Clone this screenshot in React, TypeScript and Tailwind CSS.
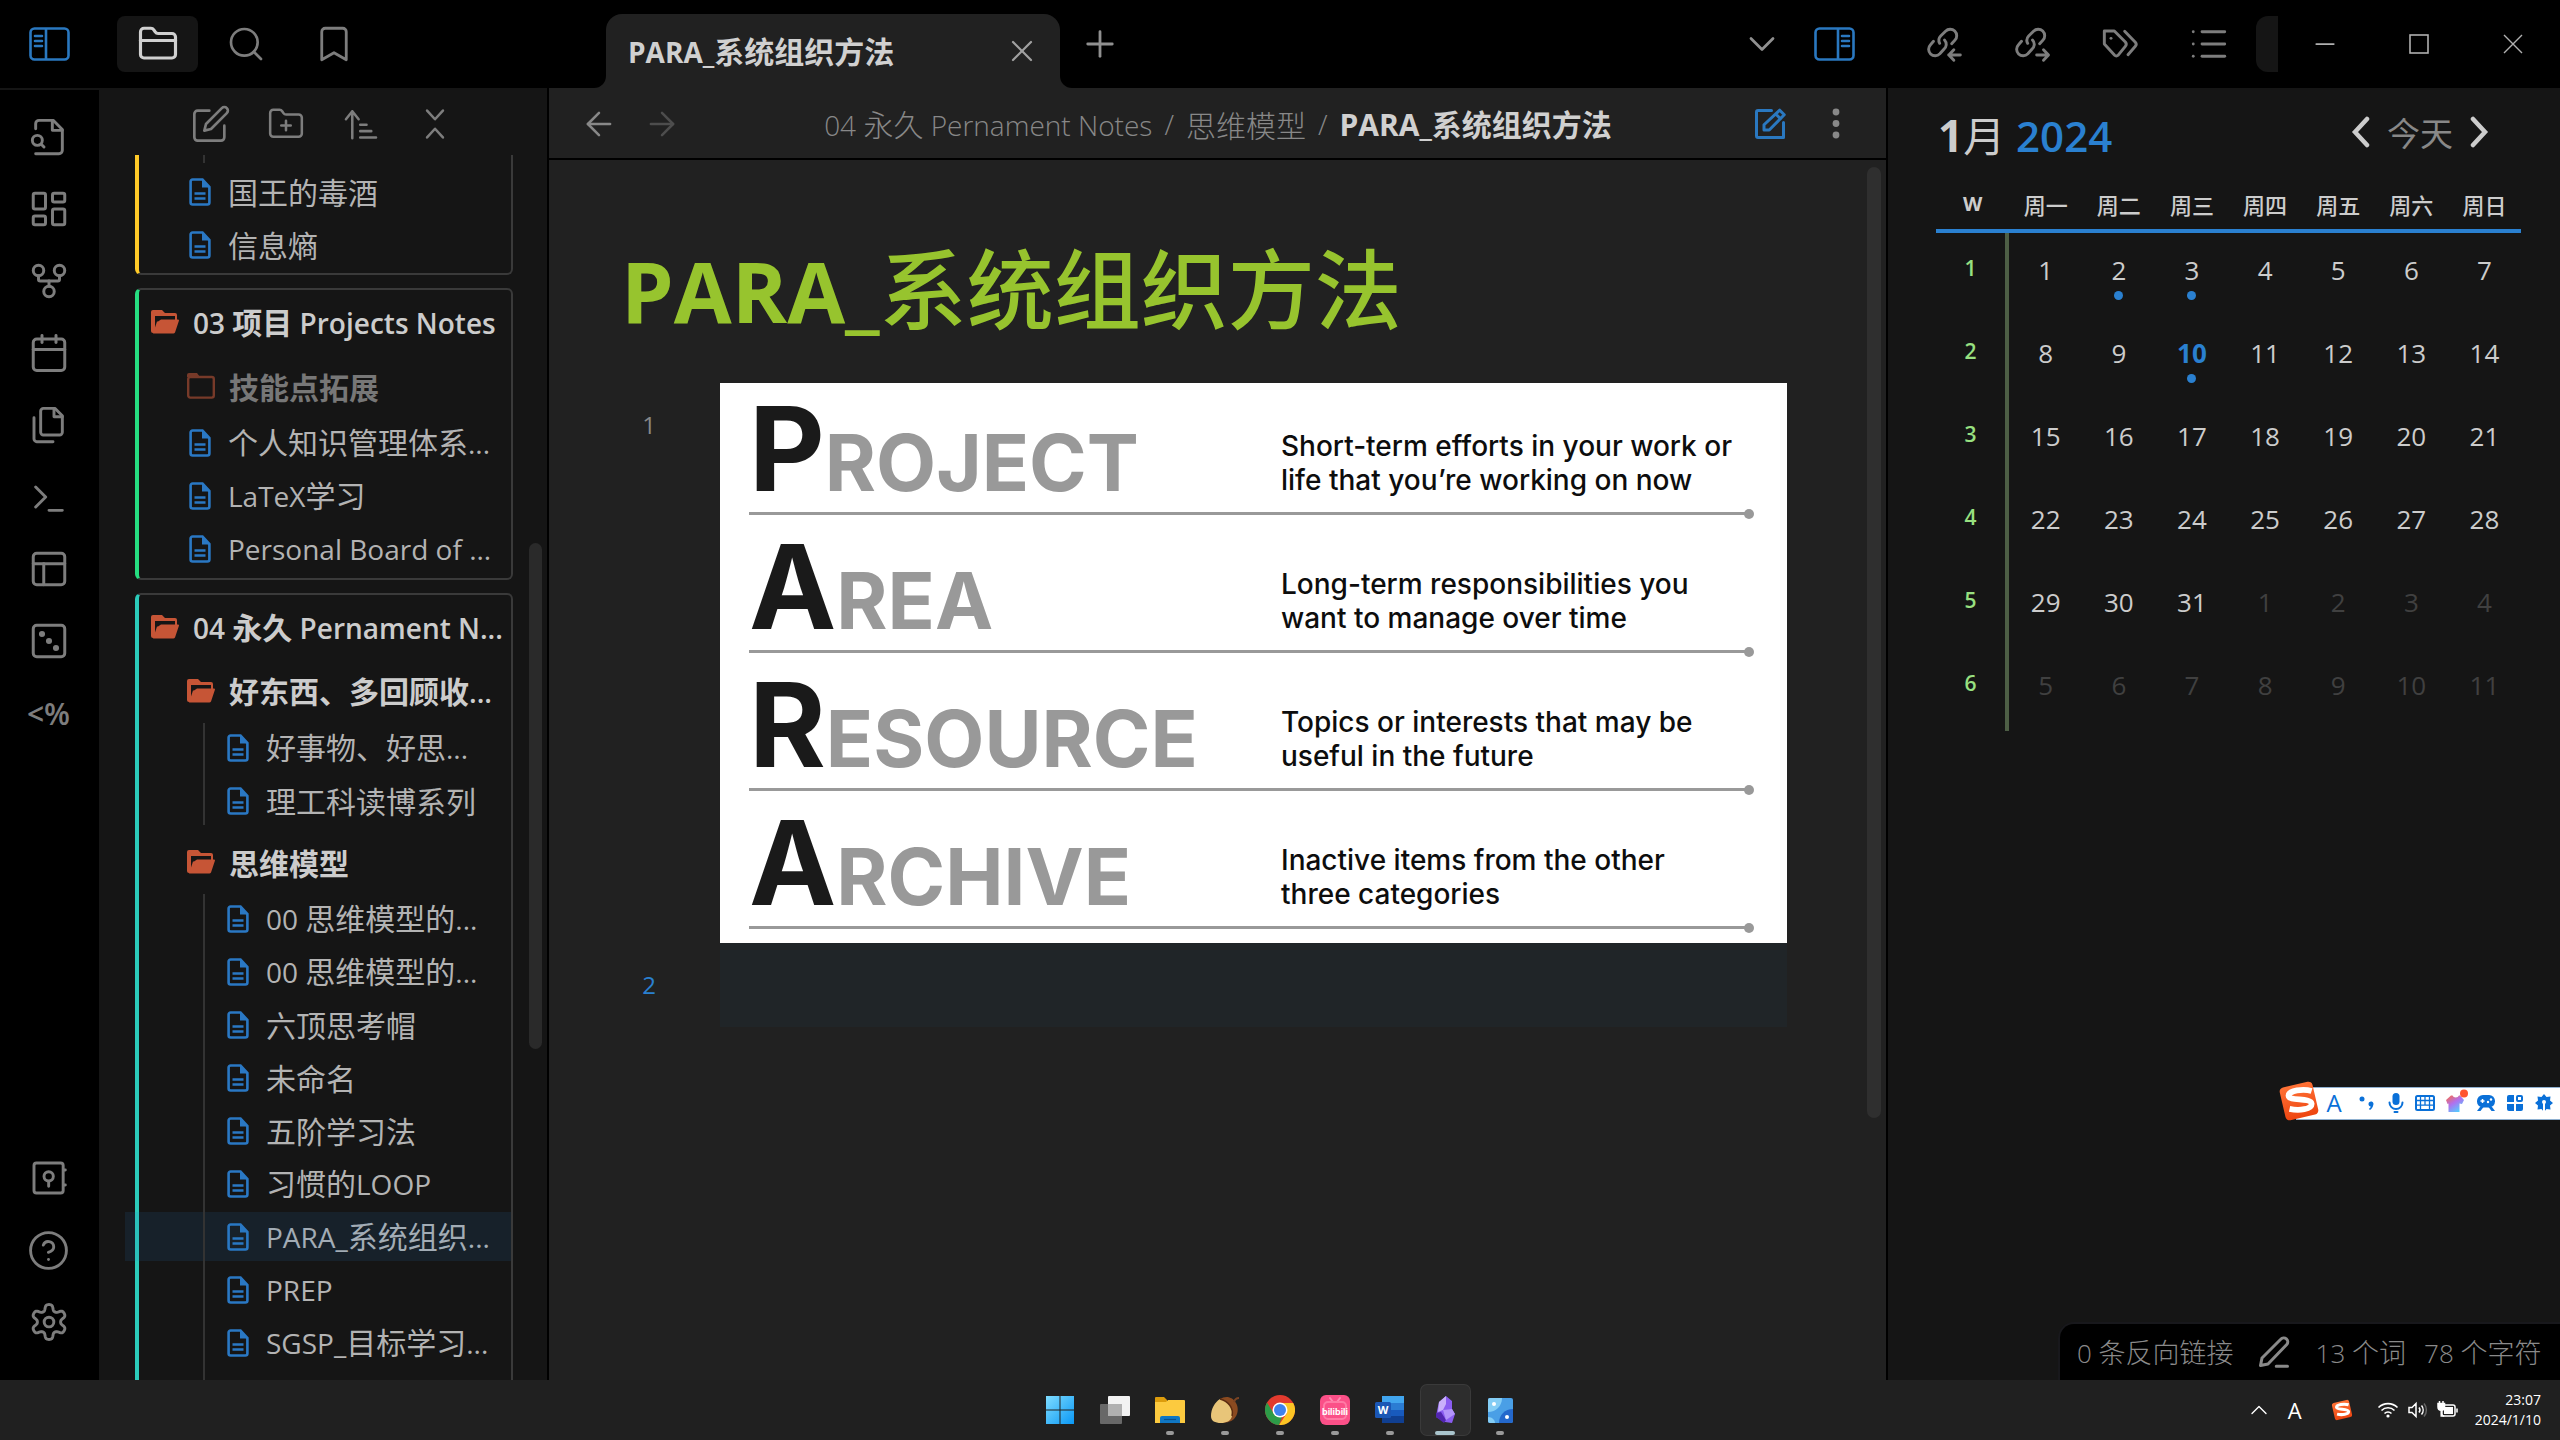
import type { ReactNode } from "react";
import {
  ArrowLeft,
  ArrowRight,
  Bookmark,
  Calendar,
  ChevronDown,
  ChevronUp,
  CircleHelp,
  GitFork,
  LayoutDashboard,
  List,
  Minus,
  PanelsTopLeft,
  Plus,
  Search,
  X,
} from "lucide-react";

const CJK = "font-['Noto_Sans_CJK_SC',sans-serif]";
const LATIN = "font-['Open_Sans','Noto_Sans_CJK_SC',sans-serif]";

/* Sets Latin runs slightly smaller than the Chinese text around them. */
function Mixed({ text, latin }: { text: string; latin: string }) {
  const parts = text.split(/([\x20-\x7e]+)/).filter(Boolean);
  return (
    <>
      {parts.map((p, i) =>
        /^[\x20-\x7e]/.test(p) ? (
          <span key={i} className={`${LATIN} ${latin} whitespace-pre`}>
            {p}
          </span>
        ) : (
          <span key={i}>{p}</span>
        ),
      )}
    </>
  );
}

function Stroke({ size = 40, width = 1.75, children }: { size?: number; width?: number; children: ReactNode }) {
  return (
    <svg
      width={size}
      height={size}
      viewBox="0 0 24 24"
      fill="none"
      stroke="currentColor"
      strokeWidth={width}
      strokeLinecap="round"
      strokeLinejoin="round"
    >
      {children}
    </svg>
  );
}

function SidePanelIcon({ right = false }: { right?: boolean }) {
  return (
    <svg width="41" height="34" viewBox="0 0 41 34" fill="none" stroke="currentColor" strokeWidth="2.6">
      <rect x="1.5" y="1.5" width="38" height="31" rx="4" />
      <path d={right ? "M24 2v30" : "M17 2v30"} />
      <path d={right ? "M28 9h7M28 14h7M28 19h7" : "M6 9h7M6 14h7M6 19h7"} strokeLinecap="round" />
    </svg>
  );
}

const gearPath = (() => {
  const pts: string[] = [];
  for (let i = 0; i < 120; i++) {
    const a = (i / 120) * Math.PI * 2;
    const c = Math.cos(6 * (a - Math.PI / 2));
    const r = 8.7 + 1.9 * Math.tanh(1.6 * c + 0.1);
    pts.push(`${(12 + r * Math.cos(a)).toFixed(2)} ${(12 + r * Math.sin(a)).toFixed(2)}`);
  }
  return `M${pts.join("L")}Z`;
})();

const FileSearchIcon = () => (
  <Stroke>
    <path d="M4 22h14a2 2 0 0 0 2-2V7.5L14.5 2H6a2 2 0 0 0-2 2v3" />
    <path d="M14 2v6h6" />
    <circle cx="5" cy="14" r="3" />
    <path d="m9 18-1.5-1.5" />
  </Stroke>
);

const FilesIcon = () => (
  <Stroke>
    <path d="M15.5 2H8.6c-.4 0-.8.2-1.1.5-.3.3-.5.7-.5 1.1v12.8c0 .4.2.8.5 1.1.3.3.7.5 1.1.5h9.8c.4 0 .8-.2 1.1-.5.3-.3.5-.7.5-1.1V6.5L15.5 2z" />
    <path d="M3 7.6v12.8c0 .4.2.8.5 1.1.3.3.7.5 1.1.5h9.8" />
    <path d="M15 2v5h5" />
  </Stroke>
);

const TerminalIcon = () => (
  <Stroke>
    <path d="m4 18 6-6-6-6M12 20h8" />
  </Stroke>
);

const DiceIcon = () => (
  <Stroke size={42} width={1.7}>
    <rect x="3" y="3" width="18" height="18" rx="2" />
    <g fill="currentColor">
      <circle cx="8" cy="8" r="0.900" />
      <circle cx="12" cy="12" r="0.900" />
      <circle cx="16" cy="16" r="0.900" />
    </g>
  </Stroke>
);

const VaultIcon = () => (
  <Stroke>
    <rect x="3" y="3" width="17.5" height="18" rx="1.5" />
    <circle cx="11.8" cy="11" r="2.8" />
    <path d="M11.8 14v3M21 7.2h.8M21 16.2h.8" />
  </Stroke>
);

const GearIcon = () => (
  <Stroke>
    <path d={gearPath} />
    <circle cx="12" cy="12" r="2.9" />
  </Stroke>
);

const LinkIcon = ({ out = false }: { out?: boolean }) => (
  <Stroke size={40}>
    <path d="M9.2 11.4a3.8 3.8 0 0 1 .6-4.4l2.9-2.9a3.9 3.9 0 0 1 5.6 5.5l-1.9 2" transform="translate(-.4 .2)" />
    <path d="M11.7 9.4a3.8 3.8 0 0 1-.5 5.7l-2.3 2.6a3.9 3.9 0 0 1-5.6-5.5l1.8-2" transform="translate(0 .2)" />
    {out ? <path d="M14.2 18.6h7M18.3 15.5l3 3.1-3 3.1" /> : <path d="M14.2 18.6h7M17.3 15.5l-3 3.1 3 3.1" />}
  </Stroke>
);

const TagsIcon = () => (
  <Stroke size={40}>
    <path d="M2.2 4.2h6l6.6 6.6a2 2 0 0 1 0 2.6l-4.4 5.4a1.4 1.4 0 0 1-2 0L2.2 12Z" transform="translate(-.2 0)" />
    <path d="M6 8.6h.01" />
    <path d="m14.2 4.4 6.4 6.6a1.8 1.8 0 0 1 0 2.4l-4.4 5" />
  </Stroke>
);

const EditIcon = ({ size = 40, width = 1.75 }: { size?: number; width?: number }) => (
  <Stroke size={size} width={width}>
    <path d="M11 4H4a2 2 0 0 0-2 2v14a2 2 0 0 0 2 2h14a2 2 0 0 0 2-2v-7" />
    <path d="M18.5 2.5a2.1 2.1 0 0 1 3 3L12 15l-4 1 1-4Z" />
  </Stroke>
);

const FolderLineIcon = () => (
  <Stroke size={42} width={1.8}>
    <path d="M20 20a2 2 0 0 0 2-2V8a2 2 0 0 0-2-2h-7.9a2 2 0 0 1-1.7-.9L9.6 3.9A2 2 0 0 0 7.9 3H4a2 2 0 0 0-2 2v13a2 2 0 0 0 2 2Z" />
    <path d="M2 10h20" />
  </Stroke>
);

const FileIcon = () => (
  <svg width="22" height="28" viewBox="0 0 22 28" className="shrink-0" fill="none" stroke="#2a78c4" strokeWidth="2.6">
    <path d="M13.5 1.5H3.6a2 2 0 0 0-2 2v21a2 2 0 0 0 2 2h14.8a2 2 0 0 0 2-2V9Z" />
    <path d="M13 2v7.5h7.5Z" fill="#2a78c4" stroke="none" />
    <path d="M5.5 15.5h11M5.5 20.5h11" strokeWidth="2.4" />
  </svg>
);

const OpenFolderIcon = () => (
  <svg width="28" height="24" viewBox="0 0 28 24" className="shrink-0">
    <path d="M2 0h9l3 3h10a2 2 0 0 1 2 2v5h-2V6H4v6L2 18Z" fill="#c65536" />
    <path d="M0 2a2 2 0 0 1 2-2h2v23H2a2 2 0 0 1-2-2Z" fill="#c65536" />
    <path d="M6 11.5h1L10 9.5h17a1 1 0 0 1 1 1l-4 12a2 2 0 0 1-2 1H2Z" fill="#c65536" />
  </svg>
);

const ClosedFolderIcon = () => (
  <svg width="28" height="26" viewBox="0 0 28 26" className="shrink-0">
    <path d="M0 2a2 2 0 0 1 2-2h8l3 4H0Z" fill="#773a29" />
    <rect x="1.2" y="4" width="25.6" height="20.6" rx="2" fill="none" stroke="#773a29" strokeWidth="2.4" />
  </svg>
);

function IconButton({ label, className = "", children }: { label: string; className?: string; children: ReactNode }) {
  return (
    <button type="button" aria-label={label} className={`flex shrink-0 items-center justify-center ${className}`}>
      {children}
    </button>
  );
}

function TopBar() {
  return (
    <header className="flex h-[88px] shrink-0 bg-black text-[#7d7d7d]">
      <div className="flex w-[549px] shrink-0 pt-4">
        <IconButton label="折叠左侧栏" className="h-14 w-[99px] text-[#2a78c0]">
          <SidePanelIcon />
        </IconButton>
        <div className="ml-[18px] flex gap-[7px]">
          <IconButton label="文件列表" className="h-14 w-[81px] rounded-lg bg-[#151515] text-[#d0d0d0]">
            <FolderLineIcon />
          </IconButton>
          <IconButton label="搜索" className="h-14 w-[81px]">
            <Search size={40} strokeWidth={1.6} />
          </IconButton>
          <IconButton label="书签" className="h-14 w-[81px]">
            <Bookmark size={42} strokeWidth={1.6} />
          </IconButton>
        </div>
      </div>

      <div className="flex min-w-0 flex-1 items-end">
        <div className="ml-[45px] size-3 shrink-0 bg-[#212121]">
          <div className="size-3 rounded-br-xl bg-black" />
        </div>
        <div className="flex h-[74px] w-[454px] items-center rounded-t-2xl bg-[#212121] pr-5 pl-[22px]">
          <span className={`${CJK} flex-1 text-[30px] leading-10 font-bold whitespace-nowrap text-[#d0d0d0]`}>
            <Mixed text="PARA_系统组织方法" latin="text-[28px]" />
          </span>
          <IconButton label="关闭标签页" className="size-9 text-[#a0a0a0]">
            <X size={38} strokeWidth={1.5} />
          </IconButton>
        </div>
        <div className="size-3 shrink-0 bg-[#212121]">
          <div className="size-3 rounded-bl-xl bg-black" />
        </div>
        <div className="flex flex-1 justify-between self-stretch pt-4 pr-6">
          <IconButton label="新标签页" className="ml-1.5 h-14 w-11 text-[#909090]">
            <Plus size={42} strokeWidth={1.6} />
          </IconButton>
          <div className="flex gap-3">
            <IconButton label="标签页列表" className="h-14 w-[60px] text-[#909090]">
              <ChevronDown size={44} strokeWidth={1.5} />
            </IconButton>
            <IconButton label="折叠右侧栏" className="h-14 w-[60px] text-[#2a78c0]">
              <SidePanelIcon right />
            </IconButton>
          </div>
        </div>
      </div>

      <div className="flex w-[672px] shrink-0 gap-[7px] pt-4 pl-4">
        <IconButton label="反向链接" className="h-14 w-[81px]">
          <LinkIcon />
        </IconButton>
        <IconButton label="出链" className="h-14 w-[81px]">
          <LinkIcon out />
        </IconButton>
        <IconButton label="标签" className="h-14 w-[81px]">
          <TagsIcon />
        </IconButton>
        <IconButton label="大纲" className="h-14 w-[81px]">
          <List size={42} strokeWidth={1.6} />
        </IconButton>
        <IconButton label="日历" className="h-14 w-[22px] rounded-l-xl bg-[#151515]">
          {null}
        </IconButton>
        <div className="-ml-[7px] flex flex-1 text-[#b0b0b0]">
          <IconButton label="最小化" className="h-14 flex-1">
            <Minus size={30} strokeWidth={1.4} />
          </IconButton>
          <IconButton label="最大化" className="h-14 flex-1">
            <svg width="20" height="20" viewBox="0 0 20 20" fill="none" stroke="currentColor" strokeWidth="1.6">
              <rect x="1" y="1" width="18" height="18" />
            </svg>
          </IconButton>
          <IconButton label="关闭" className="h-14 flex-1">
            <svg width="20" height="20" viewBox="0 0 20 20" fill="none" stroke="currentColor" strokeWidth="1.4">
              <path d="M1 1l18 18M19 1L1 19" />
            </svg>
          </IconButton>
        </div>
      </div>
    </header>
  );
}

function Ribbon() {
  return (
    <nav className="flex w-[99px] shrink-0 flex-col items-center justify-between border-t-2 border-[#151515] bg-black pt-[11px] pr-[2px] pb-[22px] text-[#7d7d7d]">
      <div className="flex flex-col">
        <IconButton label="快速切换" className="h-[72px] w-16">
          <FileSearchIcon />
        </IconButton>
        <IconButton label="新建白板" className="h-[72px] w-16">
          <LayoutDashboard size={42} strokeWidth={1.7} />
        </IconButton>
        <IconButton label="关系图谱" className="h-[72px] w-16">
          <GitFork size={42} strokeWidth={1.7} />
        </IconButton>
        <IconButton label="今日日记" className="h-[72px] w-16">
          <Calendar size={42} strokeWidth={1.7} />
        </IconButton>
        <IconButton label="插入模板" className="h-[72px] w-16">
          <FilesIcon />
        </IconButton>
        <IconButton label="命令面板" className="h-[72px] w-16">
          <TerminalIcon />
        </IconButton>
        <IconButton label="工作区布局" className="h-[72px] w-16">
          <PanelsTopLeft size={42} strokeWidth={1.7} />
        </IconButton>
        <IconButton label="随机笔记" className="h-[72px] w-16">
          <DiceIcon />
        </IconButton>
        <IconButton label="Templater" className={`${LATIN} h-[72px] w-16 text-[30px] font-semibold`}>
          &lt;%
        </IconButton>
      </div>
      <div className="flex flex-col">
        <IconButton label="打开其他仓库" className="h-[72px] w-16">
          <VaultIcon />
        </IconButton>
        <IconButton label="帮助" className="h-[72px] w-16">
          <CircleHelp size={43} strokeWidth={1.6} />
        </IconButton>
        <IconButton label="设置" className="h-[72px] w-16">
          <GearIcon />
        </IconButton>
      </div>
    </nav>
  );
}

function FileRow({ name, depth = 1, active = false }: { name: string; depth?: 1 | 2; active?: boolean }) {
  return (
    <a
      href="#"
      aria-current={active ? "page" : undefined}
      className={`relative flex h-[49px] items-center gap-[17px] ${depth === 2 ? "pl-[88px]" : "pl-[50px]"} ${
        active ? "before:absolute before:inset-y-0 before:-left-3.5 before:right-0 before:bg-[#2a78c4]/12" : ""
      }`}
    >
      <FileIcon />
      <span className="text-[30px] leading-[45px] whitespace-nowrap text-[#b3b3b3]">
        <Mixed text={name} latin="text-[28px]" />
      </span>
    </a>
  );
}

function FolderRow({ name, depth = 0, open = true }: { name: string; depth?: 0 | 1; open?: boolean }) {
  return (
    <button
      type="button"
      aria-expanded={open}
      className={`flex h-16 w-full items-center gap-[14px] ${depth === 1 ? "pl-12" : "pl-3"}`}
    >
      {open ? <OpenFolderIcon /> : <ClosedFolderIcon />}
      <span className={`text-[30px] leading-[45px] font-bold whitespace-nowrap ${open ? "text-[#cccccc]" : "text-[#777777]"}`}>
        <Mixed text={name} latin="text-[28px] font-semibold" />
      </span>
    </button>
  );
}

function Guide({ grow = false, children }: { grow?: boolean; children: ReactNode }) {
  return (
    <div
      className={`relative flex flex-col gap-1 after:absolute after:inset-y-0 after:left-16 after:w-0.5 after:bg-[#333333] ${
        grow ? "flex-1" : ""
      }`}
    >
      {children}
    </div>
  );
}

const notes = [
  "00 思维模型的...",
  "00 思维模型的...",
  "六顶思考帽",
  "未命名",
  "五阶学习法",
  "习惯的LOOP",
  "PARA_系统组织...",
  "PREP",
  "SGSP_目标学习...",
];

function Explorer() {
  return (
    <aside className={`${CJK} flex w-[448px] shrink-0 flex-col bg-[#151515]`}>
      <div className="flex h-[67px] shrink-0 items-center pt-[5px] pl-[74px] text-[#7d7d7d]">
        <IconButton label="新建笔记" className="h-12 w-[75px]">
          <EditIcon size={40} width={1.6} />
        </IconButton>
        <IconButton label="新建文件夹" className="h-12 w-[75px]">
          <Stroke size={38} width={1.6}>
            <path d="M20 20a2 2 0 0 0 2-2V8a2 2 0 0 0-2-2h-7.9a2 2 0 0 1-1.7-.9L9.6 3.9A2 2 0 0 0 7.9 3H4a2 2 0 0 0-2 2v13a2 2 0 0 0 2 2Z" />
            <path d="M12 10v6M9 13h6" />
          </Stroke>
        </IconButton>
        <IconButton label="排序方式" className="h-12 w-[75px]">
          <Stroke size={38} width={1.6}>
            <path d="m2.5 9 4-5 4 5M6.500 4v17M11.500 12.500h4M11.500 16.500h7M11.500 20.500h10" />
          </Stroke>
        </IconButton>
        <IconButton label="全部折叠" className="h-12 w-[73px]">
          <Stroke size={38} width={1.6}>
            <path d="m7 3.500 5 5.500 5-5.500M7 20.500l5-5.500 5 5.500" />
          </Stroke>
        </IconButton>
      </div>
      <div className="flex min-h-0 flex-1">
        <div className="ml-9 flex w-[378px] flex-col gap-[13px]">
          <section className="relative shrink-0 rounded-b-md border-r-2 border-b-2 border-l-4 border-[#3a3a3a] border-l-[#ffca28] pt-3 pb-1">
            <div className="absolute top-0 left-16 h-2 w-0.5 bg-[#333333]" />
            <div className="flex flex-col gap-1">
              <FileRow name="国王的毒酒" />
              <FileRow name="信息熵" />
            </div>
          </section>
          <section className="shrink-0 rounded-md border-2 border-l-4 border-[#3a3a3a] border-l-[#26de81] pb-[5px]">
            <FolderRow name="03 项目 Projects Notes" />
            <FolderRow name="技能点拓展" depth={1} open={false} />
            <div className="flex flex-col gap-1">
              <FileRow name="个人知识管理体系..." />
              <FileRow name="LaTeX学习" />
              <FileRow name="Personal Board of ..." />
            </div>
          </section>
          <section className="flex min-h-0 flex-1 flex-col rounded-t-md border-2 border-b-0 border-l-4 border-[#3a3a3a] border-l-[#2bcbba]">
            <FolderRow name="04 永久 Pernament N..." />
            <FolderRow name="好东西、多回顾收..." depth={1} />
            <Guide>
              <FileRow name="好事物、好思..." depth={2} />
              <FileRow name="理工科读博系列" depth={2} />
            </Guide>
            <div className="pt-[5px]">
              <FolderRow name="思维模型" depth={1} />
            </div>
            <Guide grow>
              {notes.map((n, i) => (
                <FileRow key={i} name={n} depth={2} active={n.startsWith("PARA")} />
              ))}
            </Guide>
          </section>
        </div>
        <div className="mt-[388px] ml-4 h-[506px] w-[13px] rounded-full bg-[#2a2a2a]" />
      </div>
    </aside>
  );
}

const para = [
  { head: "P", rest: "ROJECT", lines: ["Short-term efforts in your work or", "life that you’re working on now"] },
  { head: "A", rest: "REA", lines: ["Long-term responsibilities you", "want to manage over time"] },
  { head: "R", rest: "ESOURCE", lines: ["Topics or interests that may be", "useful in the future"] },
  { head: "A", rest: "RCHIVE", lines: ["Inactive items from the other", "three categories"] },
];

function ParaFigure() {
  return (
    <figure className="bg-white pr-[37px] pb-[14px] pl-[29px] font-['Inter',sans-serif]">
      {para.map((r, i) => (
        <div key={i} className="relative flex h-[138px] items-end justify-between border-b-3 border-[#999999] first:h-[132px]">
          <div className="flex items-baseline pb-[5px] leading-[88px] font-bold whitespace-nowrap">
            <span className="text-[117px] text-[#1a1a1a]">{r.head}</span>
            <span className="text-[78px] text-[#999999]">{r.rest}</span>
          </div>
          <p className="w-[469px] pb-[15px] text-[28px] leading-[34px] font-medium whitespace-nowrap text-[#0d0d0d]">
            {r.lines[0]}
            <br />
            {r.lines[1]}
          </p>
          <div className="absolute -right-1 -bottom-[7px] size-2.5 rounded-full bg-[#999999]" />
        </div>
      ))}
    </figure>
  );
}

function Editor() {
  return (
    <main className={`${CJK} flex min-w-0 flex-1 flex-col border-x-2 border-black bg-[#212121]`}>
      <div className="flex h-[72px] shrink-0 items-center border-b-2 border-black pt-0.5 pr-[17px] pl-[18px] text-[#888888]">
        <div className="flex w-40">
          <IconButton label="后退" className="h-12 w-[63px]">
            <ArrowLeft size={38} strokeWidth={1.6} />
          </IconButton>
          <IconButton label="前进" className="h-12 w-[63px] text-[#4d4d4d]">
            <ArrowRight size={38} strokeWidth={1.6} />
          </IconButton>
        </div>
        <nav className="flex flex-1 items-center justify-center text-[30px] leading-[44px] font-light whitespace-nowrap">
          <a href="#"><Mixed text="04 永久 Pernament Notes" latin="text-[28px]" /></a>
          <span className={`${LATIN} px-3 text-[28px]`}>/</span>
          <a href="#">思维模型</a>
          <span className={`${LATIN} px-3 text-[28px]`}>/</span>
          <span className="font-bold text-[#d0d0d0]"><Mixed text="PARA_系统组织方法" latin="text-[30px]" /></span>
        </nav>
        <div className="flex w-40 justify-end">
          <IconButton label="切换为阅读视图" className="h-12 w-[66px] text-[#2a78c0]">
            <Stroke size={36} width={2}>
              <path d="M13 3H4a1 1 0 0 0-1 1v16a1 1 0 0 0 1 1h17V11" />
              <path d="M8 16v-3.500L18.500 2.800l3 3L11.500 16ZM16 5.500l3 3" />
            </Stroke>
          </IconButton>
          <IconButton label="更多选项" className="h-12 w-[66px]">
            <svg width="8" height="32" viewBox="0 0 8 32" fill="currentColor">
              <circle cx="4" cy="4" r="3.4" />
              <circle cx="4" cy="15.500" r="3.4" />
              <circle cx="4" cy="27" r="3.4" />
            </svg>
          </IconButton>
        </div>
      </div>
      <div className="flex min-h-0 flex-1">
        <article className="min-w-0 flex-1 pt-[61px] pr-20 pl-[72px]">
          <h1 className="text-[87px] leading-[128px] font-medium whitespace-nowrap text-[#97c42e]">
            <Mixed text="PARA_系统组织方法" latin="text-[84px] font-bold" />
          </h1>
          <div className="mt-7 grid grid-cols-[60px_1fr] gap-x-[39px]">
            <div className={`${LATIN} pt-6 pr-1 text-center text-[24px] leading-9 text-[#888888]`}>1</div>
            <ParaFigure />
            <div className={`${LATIN} pt-6 pr-1 text-center text-[24px] leading-9 text-[#2a80d0]`}>2</div>
            <div className="h-[84px] bg-[#202528]" />
          </div>
        </article>
        <div className="mt-[7px] mr-[5px] h-[951px] w-[14px] rounded-full bg-[#2f2f2f]" />
      </div>
    </main>
  );
}

const weeks = [
  [1, 2, 3, 4, 5, 6, 7],
  [8, 9, 10, 11, 12, 13, 14],
  [15, 16, 17, 18, 19, 20, 21],
  [22, 23, 24, 25, 26, 27, 28],
  [29, 30, 31, 1, 2, 3, 4],
  [5, 6, 7, 8, 9, 10, 11],
];

function CalendarPanel() {
  return (
    <aside className={`${CJK} relative flex w-[672px] shrink-0 flex-col justify-between bg-[#151515]`}>
      <div className="pr-[39px] pl-12">
        <div className="flex h-[97px] items-center justify-between pr-8 pl-0.5">
          <h2 className="pb-1 text-[42px] leading-[60px] text-[#cccccc]">
            <Mixed text="1" latin="text-[44px] font-bold" />
            月
            <Mixed text=" 2024" latin="text-[42px] font-semibold text-[#2a80d0]" />
          </h2>
          <div className="flex items-center gap-4 pb-2.5">
            <IconButton label="上个月" className="text-[#cccccc]">
              <svg width="20" height="32" viewBox="0 0 20 32" fill="none" stroke="currentColor" strokeWidth="4.500" strokeLinecap="round">
                <path d="M16 3 4 16l12 13" />
              </svg>
            </IconButton>
            <button type="button" className="text-[33px] leading-[44px] text-[#888888]">今天</button>
            <IconButton label="下个月" className="text-[#cccccc]">
              <svg width="20" height="32" viewBox="0 0 20 32" fill="none" stroke="currentColor" strokeWidth="4.500" strokeLinecap="round">
                <path d="M4 3l12 13L4 29" />
              </svg>
            </IconButton>
          </div>
        </div>
        <table className="w-full table-fixed border-separate border-spacing-0">
          <thead>
            <tr className="h-12 text-[22px] leading-8 text-[#cccccc]">
              <th className={`${LATIN} border-b-4 border-[#2a80d0] p-0 pb-1.5 text-[20px] font-bold`}>W</th>
              {["周一", "周二", "周三", "周四", "周五", "周六", "周日"].map((d) => (
                <th key={d} className="border-b-4 border-[#2a80d0] p-0 pb-1.5 font-medium whitespace-nowrap">
                  {d}
                </th>
              ))}
            </tr>
          </thead>
          <tbody className={LATIN}>
            {weeks.map((w, i) => (
              <tr key={i}>
                <th className="border-r-4 border-[#4d5e45] p-0 pt-[19px] align-top text-[21px] leading-8 font-semibold text-[#98e080]">
                  {i + 1}
                </th>
                {w.map((d, j) => {
                  const outside = (i === 4 && j > 2) || i === 5;
                  const today = i === 1 && j === 2;
                  const dot = today || (i === 0 && (j === 1 || j === 2));
                  return (
                    <td key={j} className="p-0">
                      <button
                        type="button"
                        className={`flex h-[83px] w-full flex-col items-center gap-[5px] pt-[21px] text-[26px] leading-8 ${
                          outside ? "text-[#404040]" : today ? "font-bold text-[#2a80d0]" : "text-[#cccccc]"
                        }`}
                      >
                        {d}
                        {dot && <span className="size-[9px] rounded-full bg-[#2a80d0]" />}
                      </button>
                    </td>
                  );
                })}
              </tr>
            ))}
          </tbody>
        </table>
      </div>

      <footer className="flex h-[58px] w-[502px] items-center self-end rounded-tl-2xl border-t-2 border-l-2 border-[#18181c] bg-black pl-[17px] text-[27px] leading-10 font-light whitespace-nowrap text-[#8a8a8a]">
        <span><Mixed text="0 条反向链接" latin="text-[26px]" /></span>
        <span className="mr-6 ml-[22px]">
          <Stroke size={36} width={2}>
            <path d="M3 21l1-5L16.500 3.500a2.500 2.500 0 0 1 4 3.500L8 20l-5 1ZM13.500 21.500H21" />
          </Stroke>
        </span>
        <span><Mixed text="13 个词" latin="text-[26px]" /></span>
        <span className="ml-[18px]"><Mixed text="78 个字符" latin="text-[26px]" /></span>
      </footer>

      <InputMethodBar />
    </aside>
  );
}

function SogouLogo({ size }: { size: number }) {
  return (
    <svg width={size} height={size} viewBox="0 0 40 40" className="shrink-0">
      <defs>
        <linearGradient id="sogou" x1="0" y1="0" x2="0" y2="1">
          <stop offset="0" stopColor="#ff7236" />
          <stop offset="1" stopColor="#ee4510" />
        </linearGradient>
      </defs>
      <rect x="4" y="4" width="32" height="32" rx="4" fill="url(#sogou)" transform="rotate(-13 20 20)" />
      <path
        d="M32 10.500C24 8 10 10 10 15c0 5.500 21 1.500 22 7.500.5 5.500-12 7-21 5"
        fill="none"
        stroke="#fff"
        strokeWidth="5.500"
      />
    </svg>
  );
}

function InputMethodBar() {
  return (
    <div className="absolute top-[993px] right-0 flex h-[39px] w-[282px] items-center">
      <div className="absolute inset-x-0 top-[6px] bottom-0 left-[18px] border-y border-[#8fb0d0] bg-white" />
      <div className="relative flex w-full items-center text-[#0a70d8]">
        <SogouLogo size={42} />
        <div className="flex flex-1 items-center justify-between pt-1 pr-1">
          <span className={`${LATIN} w-7 text-center text-[24px] leading-8`}>A</span>
          <svg width="26" height="24" viewBox="0 0 26 24" fill="currentColor">
            <circle cx="9" cy="8" r="2.500" />
            <path d="M15.500 13a2.500 2.500 0 1 1 4.700 1.200c-.4 2.200-1.600 3.800-3.400 4.800l-.8-1.200c1-.7 1.600-1.400 1.700-2.300-1.300 0-2.200-1-2.200-2.500Z" />
          </svg>
          <svg width="24" height="24" viewBox="0 0 24 24" fill="none" stroke="currentColor" strokeWidth="2" strokeLinecap="round">
            <rect x="8.500" y="2" width="7" height="12" rx="3.500" fill="currentColor" stroke="none" />
            <path d="M5.500 11.500a6.500 6.500 0 0 0 13 0M10.500 21h3" />
          </svg>
          <svg width="24" height="24" viewBox="0 0 24 24" fill="none" stroke="currentColor" strokeWidth="2">
            <rect x="3" y="5" width="18" height="14" rx="1.500" />
            <path d="M7.500 5v14M12 5v9M16.500 5v14M3 9.500h18M3 14.200h18" strokeWidth="1.300" />
          </svg>
          <svg width="26" height="28" viewBox="0 0 26 28">
            <defs>
              <linearGradient id="shirt" x1="0" y1="0" x2="0.700" y2="1">
                <stop offset="0" stopColor="#ff6a3a" />
                <stop offset="0.500" stopColor="#b070f0" />
                <stop offset="1" stopColor="#50d0ff" />
              </linearGradient>
            </defs>
            <path d="M3 11l5-4.500h1.500a3.500 3 0 0 0 6.500 0h1L21 11l-2 4-2.500-.5V23h-11v-8.500L4.500 15Z" fill="url(#shirt)" />
            <circle cx="21" cy="4.500" r="4" fill="#ff5530" />
          </svg>
          <svg width="24" height="24" viewBox="0 0 24 24" fill="currentColor">
            <rect x="3" y="4" width="18" height="12.500" rx="6" />
            <path d="M3 20l3-4h3.500l-3 4ZM21 20l-3-4h-3.500l3 4Z" />
            <path d="M8.500 8v4M6.500 10h4" stroke="#fff" strokeWidth="1.500" />
            <circle cx="14" cy="11" r="1.200" fill="#fff" />
            <circle cx="17" cy="8.500" r="1.200" fill="#fff" />
          </svg>
          <svg width="24" height="24" viewBox="0 0 24 24" fill="currentColor">
            <path d="M6 4h5v7H4V6a2 2 0 0 1 2-2ZM4 13h7v7H6a2 2 0 0 1-2-2ZM13 13h7v5a2 2 0 0 1-2 2h-5Z" />
            <rect x="14" y="5" width="5" height="5" rx="1" fill="none" stroke="currentColor" strokeWidth="2" />
          </svg>
          <svg width="24" height="24" viewBox="0 0 24 24">
            <path d="M12 3l2.500 3 4-.5-.5 4 3 2.500-3 2.500.5 4-4-.5L12 21l-2.500-3-4 .5.5-4L3 12l3-2.500-.5-4 4 .5Z" fill="#0a70d8" />
            <path d="M12 11v10" stroke="#fff" strokeWidth="2" />
            <circle cx="12" cy="11" r="2" fill="#fff" />
          </svg>
        </div>
      </div>
    </div>
  );
}

function TaskButton({ label, running = true, active = false, children }: { label: string; running?: boolean; active?: boolean; children: ReactNode }) {
  return (
    <button
      type="button"
      aria-label={label}
      className={`relative flex h-[50px] w-[49px] items-center justify-center rounded-md ${
        active ? "bg-[#2d2d2d] ring-1 ring-[#3a3a3a]" : ""
      }`}
    >
      <svg width="30" height="30" viewBox="0 0 30 30">{children}</svg>
      {running && (
        <span className={`absolute bottom-0 h-1 rounded-full ${active ? "w-5 bg-[#a9c4cc]" : "w-2 bg-[#9a9a9a]"}`} />
      )}
    </button>
  );
}

function Taskbar() {
  return (
    <footer className="grid h-[60px] shrink-0 grid-cols-[1fr_auto_1fr] items-center bg-[#202020] text-white">
      <div />
      <div className="flex gap-1.5">
        <TaskButton label="开始" running={false}>
          <defs>
            <linearGradient id="win" x1="0" y1="0" x2="1" y2="1">
              <stop offset="0" stopColor="#7fdcff" />
              <stop offset="1" stopColor="#0a98f5" />
            </linearGradient>
          </defs>
          <path d="M1 1h13.500v13.500H1ZM15.500 1H29v13.500H15.500ZM1 15.500h13.500V29H1ZM15.500 15.500H29V29H15.500Z" fill="url(#win)" />
        </TaskButton>
        <TaskButton label="任务视图" running={false}>
          <rect x="8" y="1" width="22" height="20" rx="1" fill="#f2f2f2" />
          <rect x="0" y="9" width="22" height="20" rx="1" fill="#686868" />
          <rect x="8" y="9" width="14" height="12" fill="#b0b0b0" />
        </TaskButton>
        <TaskButton label="文件资源管理器">
          <path d="M0 3a1 1 0 0 1 1-1h8l3 3v6H0Z" fill="#dc9c0c" />
          <path d="M0 7h11l2-2h16a1 1 0 0 1 1 1v22H0Z" fill="#fcca3f" />
          <path d="M5 28v-5a2 2 0 0 1 2-2h16a2 2 0 0 1 2 2v5Z" fill="#1077c4" />
          <path d="M9 24.500h12" stroke="#0a4f8c" strokeWidth="1.200" />
        </TaskButton>
        <TaskButton label="坚果云">
          <path d="M10 4C16 0 23 2 26 8c3 5 2 12-2 16-3 3-9 4-14 4Z" fill="#8a4a20" />
          <path d="M10 4c8 2 14 9 12 17-1 5-6 7-11 7C5 28 1 26 1 21 1 14 5 7 10 4Z" fill="#e8c579" />
          <path d="M10 4c8 2 14 9 12 17" fill="none" stroke="#5c2c10" strokeWidth="1.500" />
          <path d="M24 7c1-3 2-4 5-4" fill="none" stroke="#7a4424" strokeWidth="2.200" />
        </TaskButton>
        <TaskButton label="Chrome">
          <circle cx="15" cy="15" r="15" fill="#e23a2e" />
          <path d="M15 8h13.200A15 15 0 0 1 14 30l8-12Z" fill="#fcc424" />
          <path d="M2 7.500 9 19l6 3h2l-3 8A15 15 0 0 1 2 7.500Z" fill="#2c9b48" />
          <circle cx="15" cy="15" r="7.500" fill="#fff" />
          <circle cx="15" cy="15" r="6" fill="#3f82ee" />
        </TaskButton>
        <TaskButton label="哔哩哔哩">
          <rect width="30" height="30" rx="6" fill="#fb5088" />
          <path d="M10 3l3 4M20 3l-3 4" stroke="#ff8db2" strokeWidth="2" strokeLinecap="round" />
          <rect x="4" y="7" width="22" height="17" rx="4" fill="none" stroke="#ff7aa5" strokeWidth="2" />
          <text x="15" y="20" textAnchor="middle" fontFamily="Inter" fontWeight="700" fontSize="9" fill="#fff">bilibili</text>
        </TaskButton>
        <TaskButton label="Word">
          <rect x="7" y="1" width="22" height="7" fill="#41a5ee" />
          <rect x="7" y="8" width="22" height="7" fill="#2b7cd3" />
          <rect x="7" y="15" width="22" height="6.500" fill="#185abd" />
          <rect x="7" y="21" width="22" height="7" fill="#103f91" />
          <rect x="0" y="7" width="16" height="16" rx="1.500" fill="#1b57b5" />
          <text x="8" y="19" textAnchor="middle" fontFamily="Open Sans" fontWeight="700" fontSize="11" fill="#fff">W</text>
        </TaskButton>
        <TaskButton label="Obsidian" active>
          <path d="M16 1l6 5v8l3 5-3 9-7-1-9-5 1-6 2-9Z" fill="#8a5cf0" />
          <path d="M16 1 9 7l-1 10 5-2 3-6Z" fill="#c9b0fb" />
          <path d="M6 18l5-1 5 8-2 3-8-6Z" fill="#5226b0" />
          <path d="M13 15l9-1 3 5-9 6Z" fill="#b394fa" />
        </TaskButton>
        <TaskButton label="桌面工具">
          <rect x="3" y="3" width="25" height="25" rx="2" fill="#4a9fe6" />
          <path d="M3 5a2 2 0 0 1 2-2h12c0 8-6 14-14 14Z" fill="#84cdf5" />
          <path d="M28 14v12a2 2 0 0 1-2 2H14c0-8 6-14 14-14Z" fill="#2468cc" />
          <path d="M3 22c4 0 7 3 7 6H5a2 2 0 0 1-2-2Z" fill="#84cdf5" />
          <circle cx="9" cy="9" r="2" fill="#fff" />
          <circle cx="22" cy="22" r="2" fill="#fff" />
        </TaskButton>
      </div>
      <div className="flex items-center justify-end pr-[19px]">
        <ChevronUp size={28} strokeWidth={1.200} className="mr-2.5" />
        <span className={`${LATIN} w-6 text-center text-[22px] leading-8`}>A</span>
        <span className="mr-6 ml-6 flex"><SogouLogo size={22} /></span>
        <span className="flex items-center gap-[9px]">
          <svg width="22" height="20" viewBox="0 0 22 20" fill="none" stroke="currentColor" strokeWidth="1.600">
            <path d="M1.500 7.500a13.500 13.500 0 0 1 19 0M4.500 10.500a9.200 9.200 0 0 1 13 0M7.500 13.500a5 5 0 0 1 7 0" />
            <circle cx="11" cy="16" r="1.600" fill="currentColor" stroke="none" />
          </svg>
          <svg width="20" height="20" viewBox="0 0 20 20" fill="none" stroke="currentColor" strokeWidth="1.500">
            <path d="M1 7.500h3l4-4v13l-4-4H1ZM11 7.500a4 4 0 0 1 0 5M13.500 5.500a7 7 0 0 1 0 9" />
            <path d="M16 3.500a10 10 0 0 1 0 13" stroke="#666666" />
          </svg>
          <svg width="22" height="20" viewBox="0 0 22 20" fill="none" stroke="currentColor" strokeWidth="1.500">
            <rect x="5" y="5" width="13" height="11" rx="2" />
            <rect x="7" y="7" width="9" height="7" fill="currentColor" stroke="none" />
            <path d="M20 8.500v4M2.500 1v3M6 1v3M4.200 8v8h3" />
            <path d="M1 3.500h6.500V7a2.500 2.500 0 0 1-6.500 0Z" fill="currentColor" />
          </svg>
        </span>
        <time dateTime="2024-01-10T23:07" className={`${LATIN} ml-4 text-right text-[14px] leading-5`}>
          23:07
          <br />
          2024/1/10
        </time>
      </div>
    </footer>
  );
}

export default function App() {
  return (
    <div className="flex h-screen flex-col overflow-hidden bg-black">
      <TopBar />
      <div className="flex min-h-0 flex-1">
        <Ribbon />
        <Explorer />
        <Editor />
        <CalendarPanel />
      </div>
      <Taskbar />
    </div>
  );
}
